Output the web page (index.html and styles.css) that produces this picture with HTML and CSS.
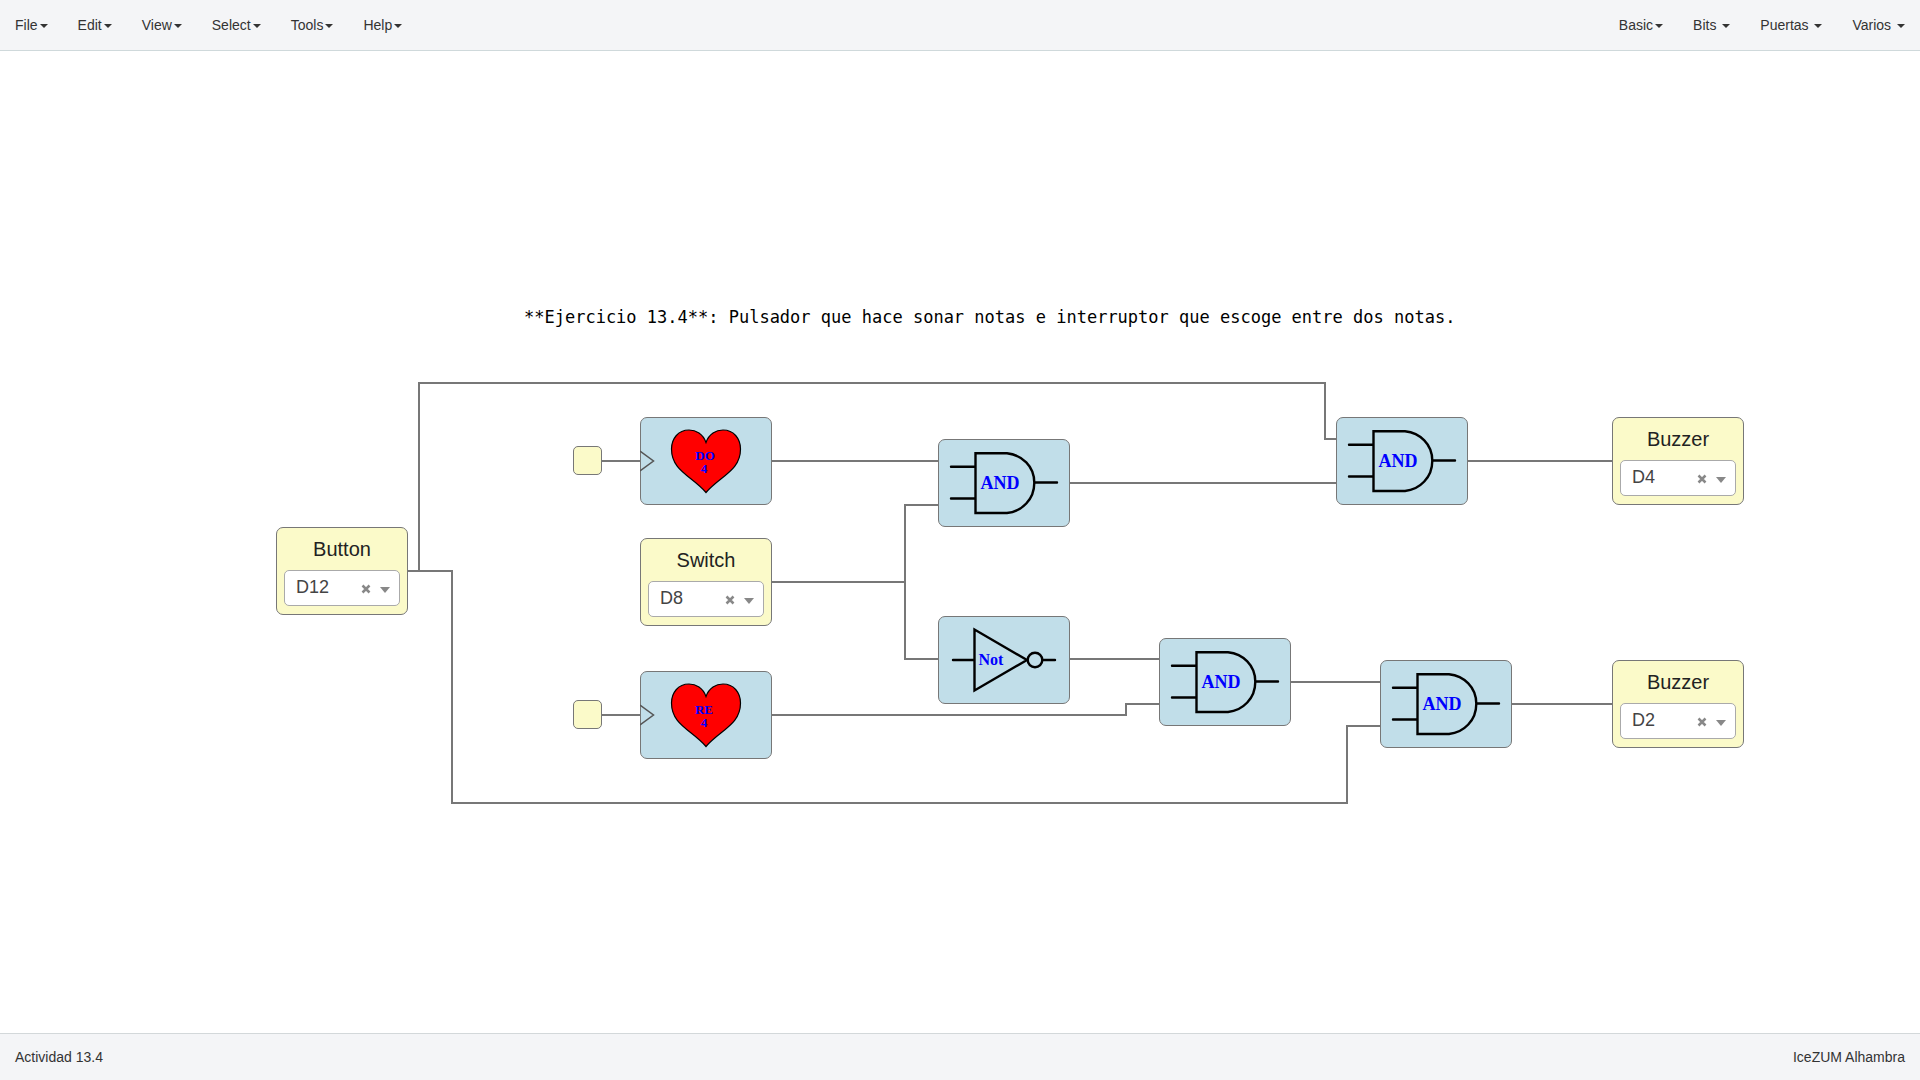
FILE: index.html
```html
<!DOCTYPE html>
<html lang="es">
<head>
<meta charset="utf-8">
<meta name="viewport" content="width=device-width, initial-scale=1">
<title>Actividad 13.4</title>
<link rel="stylesheet" href="styles.css">
</head>
<body>
<header class="menubar">
  <nav class="menu" aria-label="Main">
    <button type="button" class="menu-item">File<span class="caret"></span></button>
    <button type="button" class="menu-item">Edit<span class="caret"></span></button>
    <button type="button" class="menu-item">View<span class="caret"></span></button>
    <button type="button" class="menu-item">Select<span class="caret"></span></button>
    <button type="button" class="menu-item">Tools<span class="caret"></span></button>
    <button type="button" class="menu-item">Help<span class="caret"></span></button>
  </nav>
  <nav class="menu" aria-label="Blocks">
    <button type="button" class="menu-item">Basic<span class="caret"></span></button>
    <button type="button" class="menu-item">Bits <span class="caret"></span></button>
    <button type="button" class="menu-item">Puertas <span class="caret"></span></button>
    <button type="button" class="menu-item">Varios <span class="caret"></span></button>
  </nav>
</header>

<main class="canvas">
  <svg class="symbols" aria-hidden="true">
    <symbol id="and-gate" viewBox="0 0 132 88">
      <path class="gate" d="M13 27.700H37.500M13 59.500H37.500M37.500 14.300H69C84 16 96.300 27 96.300 43.700S84 72.500 69 74H37.500ZM96.300 43.500H119"/>
    </symbol>
    <symbol id="heart" viewBox="0 0 132 88">
      <path class="heart" d="M66 25.500C63 17 56 13 49 13C38 13 31.500 22 31.500 32C31.500 54 52 59 66 75.500C80 59 100.500 54 100.500 32C100.500 22 94 13 83 13C76 13 69 17 66 25.500Z"/>
      <path class="clock-mark" d="M0 34L13.500 44L0 54"/>
    </symbol>
    <symbol id="cross" viewBox="0 0 10 10">
      <path class="cross" d="M1.500 1.500L8.500 8.500M8.500 1.500L1.500 8.500"/>
    </symbol>
  </svg>

  <svg class="wires" aria-hidden="true">
    <path d="M408 520H452V752H1347V675H1380"/>
    <path d="M419 520V332H1325V388H1336"/>
    <path d="M602 410H640M772 410H938"/>
    <path d="M772 531H905M938 454H905V608H938"/>
    <path d="M602 664H640M772 664H1126V653H1159"/>
    <path d="M1070 432H1336M1070 608H1159M1291 631H1380"/>
    <path d="M1468 410H1612M1512 653H1612"/>
  </svg>

  <p class="comment">**Ejercicio 13.4**: Pulsador que hace sonar notas e interruptor que escoge entre dos notas.</p>

  <div class="block io button-in">
    <label for="pin-button">Button</label>
    <div class="picker">
      <select id="pin-button"><option>D12</option></select>
      <button type="button" class="clear" aria-label="Clear"><svg><use href="#cross"/></svg></button>
    </div>
  </div>
  <div class="block io switch-in">
    <label for="pin-switch">Switch</label>
    <div class="picker">
      <select id="pin-switch"><option>D8</option></select>
      <button type="button" class="clear" aria-label="Clear"><svg><use href="#cross"/></svg></button>
    </div>
  </div>
  <div class="block io buzzer-a">
    <label for="pin-buzzer-a">Buzzer</label>
    <div class="picker">
      <select id="pin-buzzer-a"><option>D4</option></select>
      <button type="button" class="clear" aria-label="Clear"><svg><use href="#cross"/></svg></button>
    </div>
  </div>
  <div class="block io buzzer-b">
    <label for="pin-buzzer-b">Buzzer</label>
    <div class="picker">
      <select id="pin-buzzer-b"><option>D2</option></select>
      <button type="button" class="clear" aria-label="Clear"><svg><use href="#cross"/></svg></button>
    </div>
  </div>

  <div class="clock clock-do"></div>
  <div class="clock clock-re"></div>

  <div class="block logic note-do">
    <svg viewBox="0 0 132 88"><use href="#heart"/><text class="note" x="65" y="43">DO</text><text class="note" x="64" y="56">4</text></svg>
  </div>
  <div class="block logic note-re">
    <svg viewBox="0 0 132 88"><use href="#heart"/><text class="note" x="64" y="43">RE</text><text class="note" x="64" y="56">4</text></svg>
  </div>
  <div class="block logic and-a">
    <svg viewBox="0 0 132 88"><use href="#and-gate"/><text class="gate-text" x="62" y="50">AND</text></svg>
  </div>
  <div class="block logic and-b">
    <svg viewBox="0 0 132 88"><use href="#and-gate"/><text class="gate-text" x="62" y="50">AND</text></svg>
  </div>
  <div class="block logic and-c">
    <svg viewBox="0 0 132 88"><use href="#and-gate"/><text class="gate-text" x="62" y="50">AND</text></svg>
  </div>
  <div class="block logic and-d">
    <svg viewBox="0 0 132 88"><use href="#and-gate"/><text class="gate-text" x="62" y="50">AND</text></svg>
  </div>
  <div class="block logic not-a">
    <svg viewBox="0 0 132 88">
      <path class="gate" d="M15 44H36.500M36.500 13.500V74.500L89 44ZM105 44H117"/>
      <circle class="gate" cx="97" cy="44" r="7.300"/>
      <text class="gate-text gate-text-not" x="53" y="49">Not</text>
    </svg>
  </div>
</main>

<footer class="statusbar">
  <span>Actividad 13.4</span>
  <span>IceZUM Alhambra</span>
</footer>
</body>
</html>
```
FILE: styles.css
```css
* {
  box-sizing: border-box;
}

body {
  display: flex;
  flex-direction: column;
  min-height: 100vh;
  margin: 0;
  background: #fff;
  color: #333;
  font: 14px/20px "Liberation Sans", Arial, sans-serif;
}

button,
select {
  font: inherit;
  color: inherit;
}

/* Top and bottom bars */
.menubar,
.statusbar {
  display: flex;
  justify-content: space-between;
  align-items: center;
  background: #f4f5f7;
}

.menubar {
  border-bottom: 1px solid #cfd9db;
}

.statusbar {
  padding: 13px 15px;
  border-top: 1px solid #d3d8da;
}

.menu {
  display: flex;
}

.menu-item {
  padding: 15px;
  border: 0;
  background: none;
  white-space: pre;
}

.caret {
  display: inline-block;
  margin-left: 2px;
  vertical-align: middle;
  border-top: 4px solid;
  border-right: 4px solid transparent;
  border-left: 4px solid transparent;
}

/* Circuit canvas */
.canvas {
  position: relative;
  flex: 1;
  min-height: 800px;
}

.symbols {
  position: absolute;
  width: 0;
  height: 0;
}

.wires {
  position: absolute;
  inset: 0;
  width: 100%;
  height: 100%;
  overflow: visible;
  fill: none;
  stroke: #777;
  stroke-width: 2;
}

.comment {
  position: absolute;
  left: 524px;
  top: 256px;
  margin: 0;
  color: #000;
  font: 17px/20px "DejaVu Sans Mono", monospace;
  white-space: nowrap;
}

.block,
.clock {
  position: absolute;
  border: 1px solid #777;
  border-radius: 7px;
}

.block {
  width: 132px;
  height: 88px;
}

.io,
.clock {
  background: #fbfac9;
}

.logic {
  background: #c1dee9;
}

.logic > svg {
  display: block;
  width: 132px;
  height: 88px;
  margin: -1px;
}

.clock {
  width: 29px;
  height: 29px;
  border-radius: 5px;
}

.io {
  display: flex;
  flex-direction: column;
  gap: 9px;
  padding: 9px 7px;
}

.io label {
  color: #222;
  font-size: 20px;
  line-height: 24px;
  text-align: center;
}

.picker {
  position: relative;
}

.picker select {
  display: block;
  width: 100%;
  height: 36px;
  padding: 0 0 2px 11px;
  border: 1px solid #aaa;
  border-radius: 5px;
  background: #fff;
  color: #444;
  font-size: 18px;
  appearance: none;
}

.picker::after {
  content: "";
  position: absolute;
  top: 17px;
  right: 10px;
  border-top: 6px solid #888;
  border-right: 5px solid transparent;
  border-left: 5px solid transparent;
  pointer-events: none;
}

.clear {
  position: absolute;
  top: 14px;
  right: 29px;
  width: 10px;
  height: 10px;
  padding: 0;
  border: 0;
  background: none;
}

.clear svg {
  display: block;
  width: 10px;
  height: 10px;
}

/* Drawings inside the blocks */
.cross {
  fill: none;
  stroke: #888;
  stroke-width: 2.5;
}

.gate {
  fill: none;
  stroke: #000;
  stroke-width: 2.4;
  stroke-linecap: round;
}

.gate-text,
.note {
  fill: #00f;
  font-family: "Liberation Serif", "Times New Roman", serif;
  font-weight: bold;
  text-anchor: middle;
}

.gate-text {
  font-size: 18px;
}

.gate-text-not {
  font-size: 16px;
}

.note {
  font-size: 13px;
}

.heart {
  fill: #f00;
  stroke: #000;
  stroke-width: 1.2;
}

.clock-mark {
  fill: none;
  stroke: #555;
  stroke-width: 1.5;
}

/* Block placement on the canvas */
.button-in { left: 276px; top: 476px; }
.switch-in { left: 640px; top: 487px; }
.buzzer-a { left: 1612px; top: 366px; }
.buzzer-b { left: 1612px; top: 609px; }
.clock-do { left: 573px; top: 395px; }
.clock-re { left: 573px; top: 649px; }
.note-do { left: 640px; top: 366px; }
.note-re { left: 640px; top: 620px; }
.and-a { left: 938px; top: 388px; }
.and-b { left: 1159px; top: 587px; }
.and-c { left: 1380px; top: 609px; }
.and-d { left: 1336px; top: 366px; }
.not-a { left: 938px; top: 565px; }
```
